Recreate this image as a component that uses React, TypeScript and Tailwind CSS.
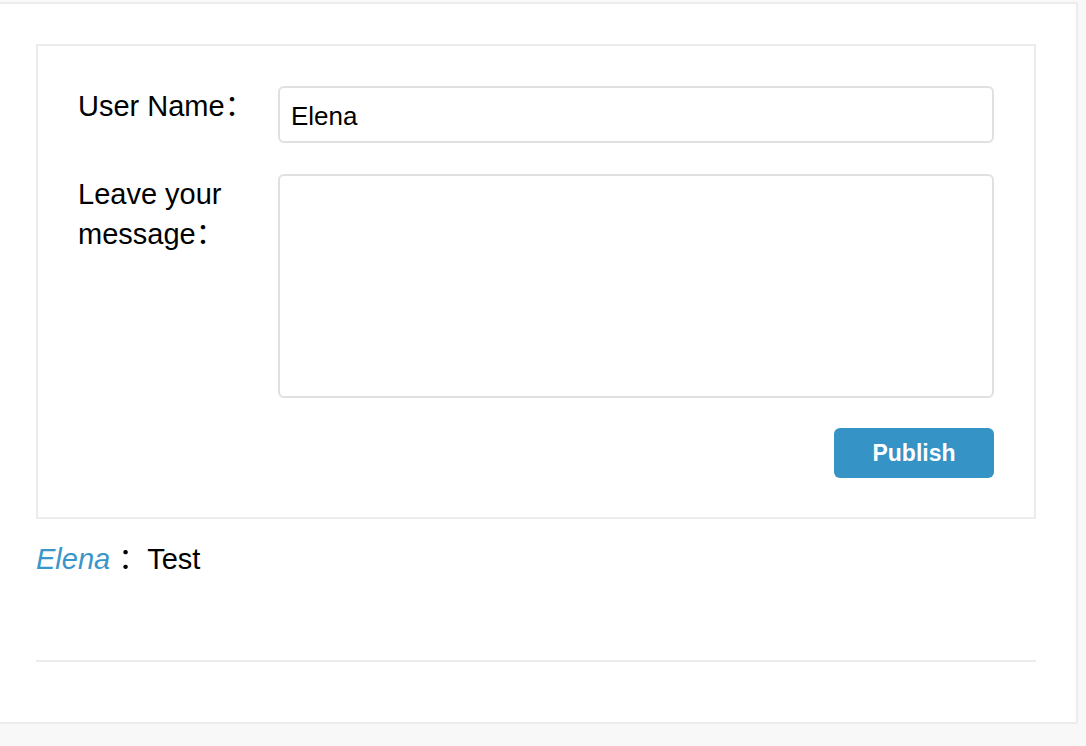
const App = () => {
  return (
    <div className="min-h-[746px] bg-[#f8f8f8] pt-[2px] text-black font-['Liberation_Sans','Noto_Sans_CJK_SC',sans-serif]">
      <div className="w-[1078px] border-y-2 border-r-2 border-[#ececec] bg-white pl-[36px] pr-[40px] pt-[40px] pb-[60px]">
        <div className="border-2 border-[#ececec] px-[40px] pt-[40px] pb-[39px]">
          <div className="flex">
            <label className="w-[200px] shrink-0 text-[29px] leading-[40px]">User Name：</label>
            <input
              className="h-[57px] flex-1 rounded-md border-2 border-[#e0e0e0] px-[11px] pt-[3px] text-[26px] outline-none"
              defaultValue="Elena"
            />
          </div>
          <div className="mt-[31px] flex">
            <label className="w-[200px] shrink-0 pr-[50px] text-[29px] leading-[40px]">Leave your message：</label>
            <textarea className="h-[224px] flex-1 resize-none rounded-md border-2 border-[#e0e0e0] px-[11px] text-[26px] outline-none" />
          </div>
          <div className="mt-[30px] flex justify-end">
            <button className="h-[50px] w-[160px] rounded-md bg-[#3593c6] pt-[1px] text-[23px] font-semibold text-white">
              Publish
            </button>
          </div>
        </div>
        <div className="mt-[20px] text-[29px] leading-[40px]">
          <span className="italic text-[#3a96ca]">Elena</span> ：Test
        </div>
        <div className="mt-[81px] h-[2px] bg-[#ececec]" />
      </div>
    </div>
  );
};

export default App;
